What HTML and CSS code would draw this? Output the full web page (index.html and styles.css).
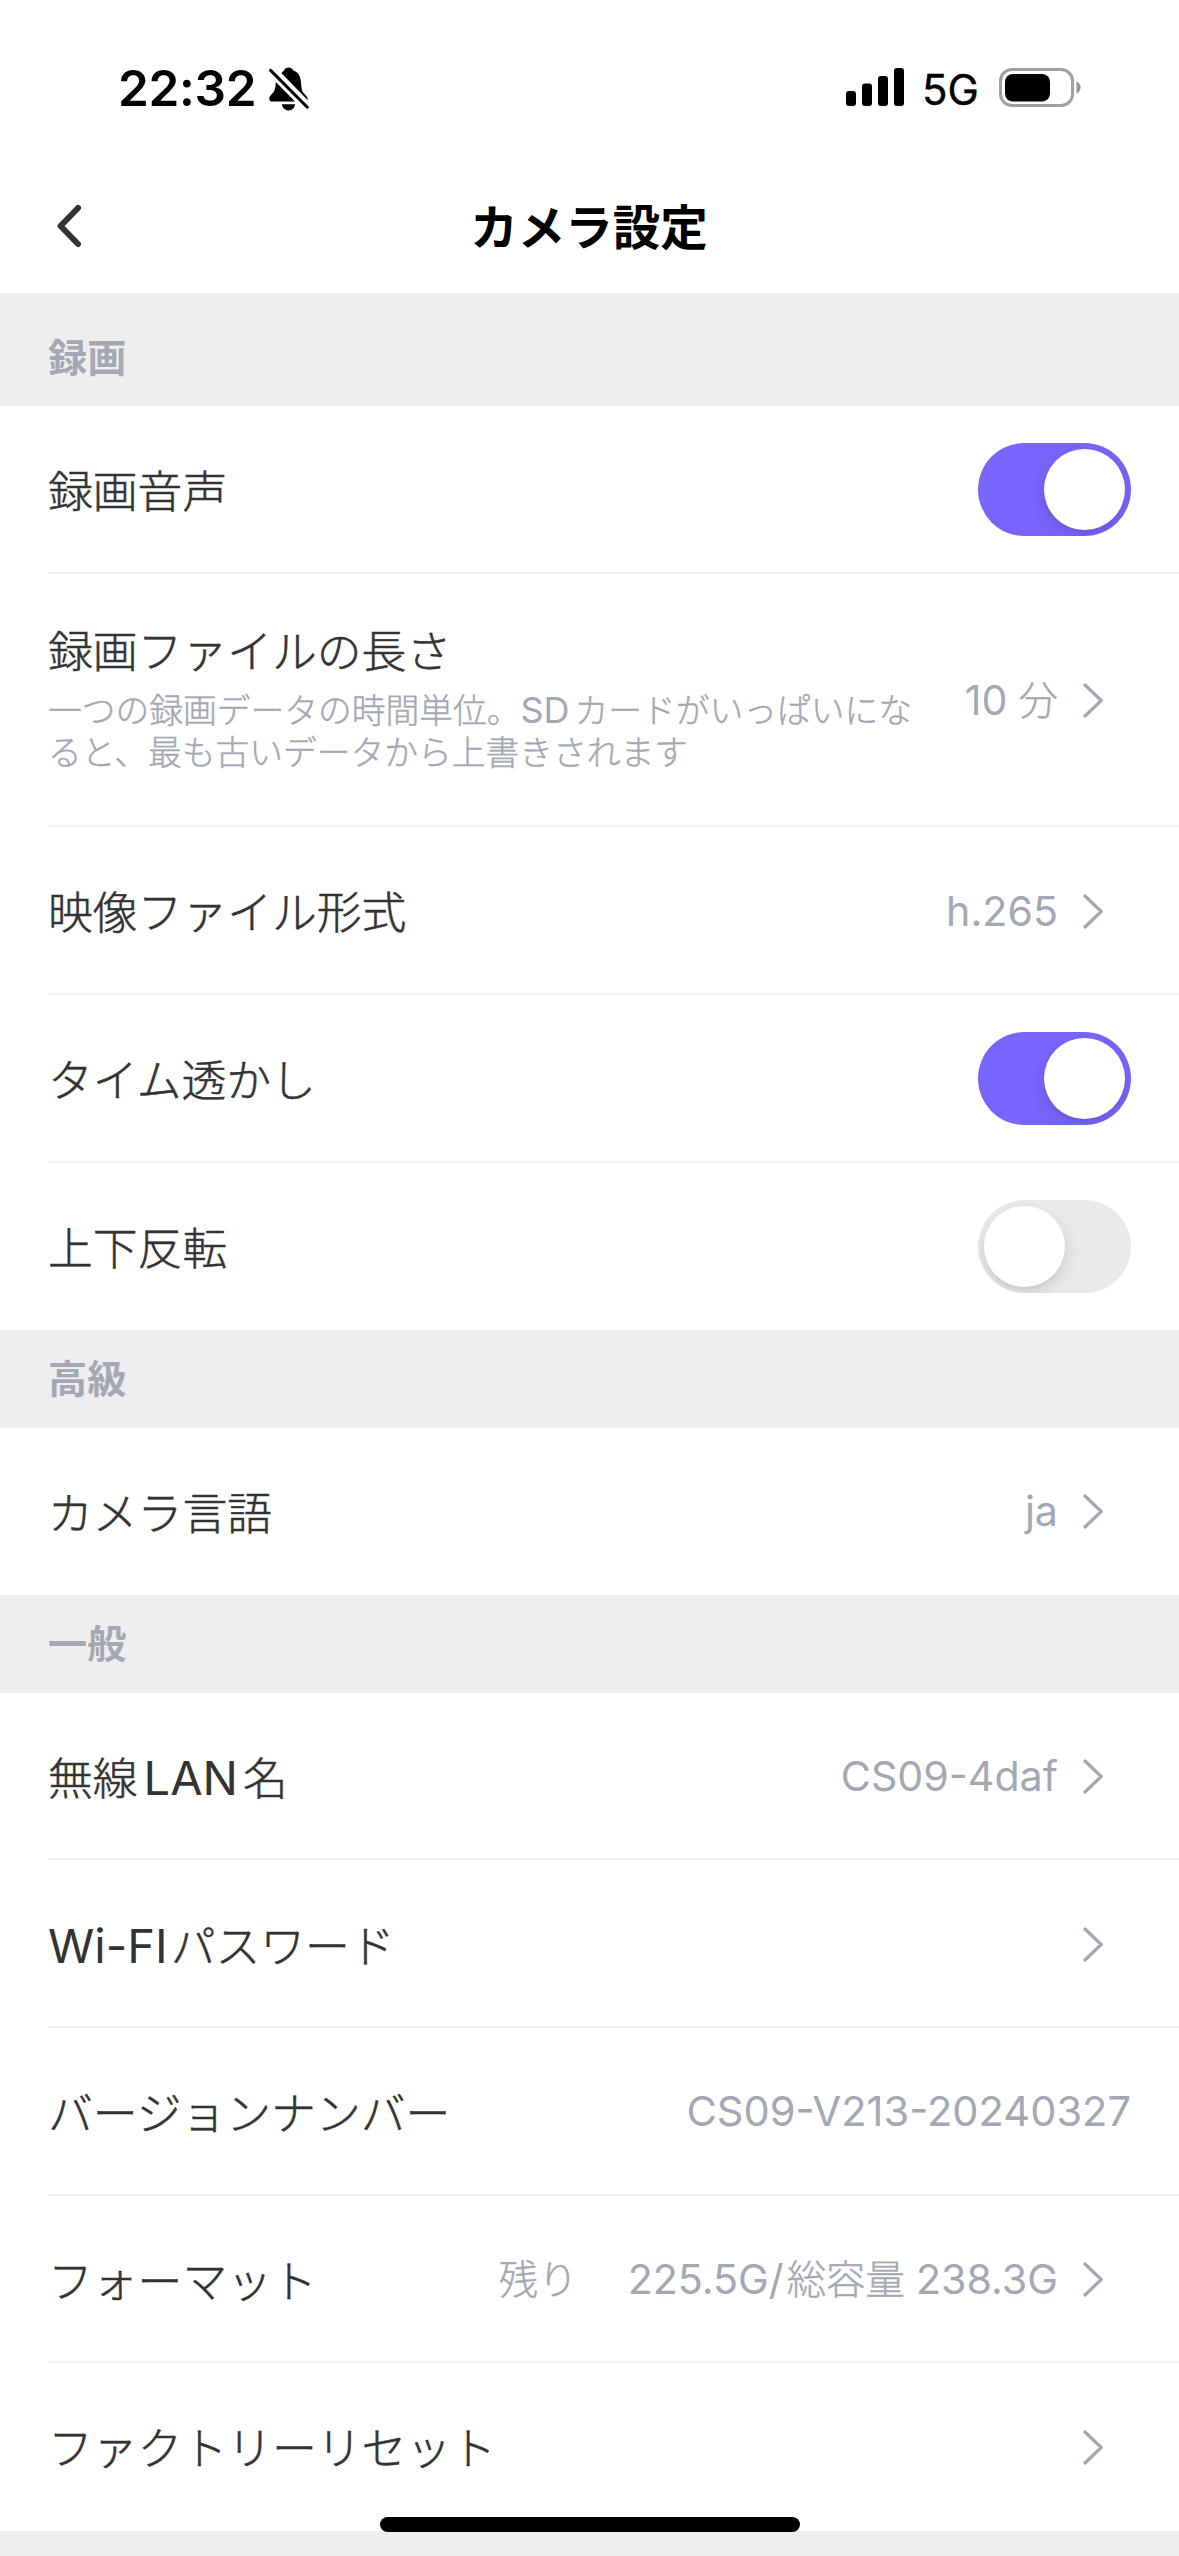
FILE: index.html
```html
<!DOCTYPE html>
<html lang="ja">
<head>
<meta charset="utf-8">
<meta name="viewport" content="width=device-width">
<title>カメラ設定</title>
<link rel="stylesheet" href="styles.css">
</head>
<body>
<svg class="defs" width="0" height="0" aria-hidden="true">
  <symbol id="chevron" viewBox="0 0 21 35"><path d="M2 2 L18.2 17.5 L2 33" fill="none" stroke="currentColor" stroke-width="3.2" stroke-linecap="round" stroke-linejoin="round"/></symbol>
</svg>
<div class="screen">
  <div class="statusbar">
    <span class="time">22:32</span>
    <svg class="bell" width="40" height="44" viewBox="0 0 40 44">
      <path d="M12.5 6.2 C13.5 4.8 14.3 4 15 3.4 C16 1.2 17.500 0.400 19.500 0.400 C21.600 0.400 23.400 1.300 24.300 3.400 C29.500 5.200 31.600 9.500 32 15.500 C32.400 22 33 24.500 35.500 27 C37.500 29 38.700 30.500 38.700 32 C38.700 32.400 38.600 32.600 38.400 32.800 Z"/>
      <path d="M6.800 15 L26 34.600 H3.400 C1.400 34.600 0.200 33.500 0.200 31.700 C0.200 29.700 2 28 4 25.800 C6 23.500 6.400 20.500 6.800 15 Z"/>
      <path d="M12.800 37.200 H26.200 C25.400 41 22.900 43.400 19.500 43.400 C16.100 43.400 13.600 41 12.800 37.200 Z"/>
      <path d="M1.600 3.400 L38.300 40.200" stroke="#fff" stroke-width="7"/>
      <path d="M1.600 3.400 L38.300 40.200" stroke="#000" stroke-width="3" stroke-linecap="round"/>
    </svg>
    <div class="indicators">
      <svg class="signal" width="58" height="38" viewBox="0 0 58 38">
        <rect x="0" y="23" width="10" height="15" rx="3"/>
        <rect x="16" y="15.500" width="10" height="22.500" rx="3"/>
        <rect x="32" y="8" width="10" height="30" rx="3"/>
        <rect x="48" y="0" width="10" height="38" rx="3"/>
      </svg>
      <span class="network">5G</span>
      <svg class="battery" width="82" height="40" viewBox="0 0 82 40">
        <rect x="1.500" y="1.500" width="72" height="36" rx="11.500" fill="none" stroke="#a0a0a0" stroke-width="3"/>
        <rect x="6" y="6" width="45" height="27.500" rx="8"/>
        <path d="M77.500 13.500 C83 15.500 83 23.500 77.500 25.500 Z" fill="#999"/>
      </svg>
    </div>
  </div>
  <header class="navbar">
    <svg class="back" width="26" height="44" viewBox="0 0 26 44"><path d="M22 4 L4.500 22 L22 40" fill="none" stroke="#333" stroke-width="6" stroke-linecap="round" stroke-linejoin="round"/></svg>
    <h1 class="title">カメラ設定</h1>
  </header>
  <main class="settings">
    <h2 class="section section-first">録画</h2>
    <div class="row"><span class="label">録画音声</span><span class="toggle on"><span class="knob"></span></span></div>
    <div class="row row-tall">
      <div class="text">
        <span class="label">録画ファイルの長さ</span>
        <p class="desc">一つの録画データの時間単位。<span class="latin">SD</span>カードがいっぱいになると、最も古いデータから上書きされます</p>
      </div>
      <span class="value"><span class="latin">10</span> 分</span><svg class="chevron"><use href="#chevron"/></svg>
    </div>
    <div class="row"><span class="label">映像ファイル形式</span><span class="value"><span class="latin">h.265</span></span><svg class="chevron"><use href="#chevron"/></svg></div>
    <div class="row"><span class="label">タイム透かし</span><span class="toggle on"><span class="knob"></span></span></div>
    <div class="row last"><span class="label">上下反転</span><span class="toggle"><span class="knob"></span></span></div>
    <h2 class="section">高級</h2>
    <div class="row last"><span class="label">カメラ言語</span><span class="value"><span class="latin">ja</span></span><svg class="chevron"><use href="#chevron"/></svg></div>
    <h2 class="section">一般</h2>
    <div class="row"><span class="label">無線<span class="latin lan">LAN</span>名</span><span class="value"><span class="latin">CS09-4daf</span></span><svg class="chevron"><use href="#chevron"/></svg></div>
    <div class="row"><span class="label"><span class="latin wifi">Wi-FI</span>パスワード</span><svg class="chevron"><use href="#chevron"/></svg></div>
    <div class="row"><span class="label">バージョンナンバー</span><span class="value"><span class="latin version">CS09-V213-20240327</span></span></div>
    <div class="row"><span class="label">フォーマット</span><span class="value"><span class="remain">残り</span><span class="latin free">225.5G/</span>総容量 <span class="latin">238.3G</span></span><svg class="chevron"><use href="#chevron"/></svg></div>
    <div class="row last"><span class="label">ファクトリーリセット</span><svg class="chevron"><use href="#chevron"/></svg></div>
  </main>
  <div class="home-indicator"></div>
</div>
</body>
</html>
```
FILE: styles.css
```css
* { box-sizing: border-box; }
body { margin: 0; background: #eee; font-family: Inter, "Noto Sans CJK JP", sans-serif; }
.defs { position: absolute; }
.screen { position: relative; width: 1179px; height: 2556px; overflow: hidden; background: #eee; }
.statusbar { display: flex; align-items: flex-start; height: 162px; padding: 67px 98px 0 118px; background: #fff; color: #000; }
.time { width: 150.500px; font-size: 49.500px; font-weight: 600; line-height: 42px; letter-spacing: -.3px; white-space: nowrap; }
.bell { flex: none; }
.indicators { display: flex; align-items: flex-start; margin-left: auto; }
.signal { margin-top: 1px; }
.network { width: 77px; margin: 4px 0 0 18px; font-size: 42px; font-weight: 400; -webkit-text-stroke: .4px; line-height: 38px; }
.battery { margin-top: 1px; }
.navbar { display: flex; align-items: center; height: 131px; padding: 0 56px; background: #fff; }
.back { flex: none; margin-bottom: 3px; }
.title { flex: 1; margin: 0 27px 0 0; text-align: center; font-size: 47.500px; font-weight: 700; line-height: 60px; }
.section { display: flex; align-items: center; height: 97.300px; margin: 0; padding: 0 48px; font-size: 39.200px; font-weight: 700; line-height: 50px; color: #a2a9b4; background: #eee; }
.section-first { height: 113px; padding-top: 17px; }
.row { display: flex; align-items: center; position: relative; height: 167.700px; padding: 0 48px; background: #fff; color: #333; }
.row::after { content: ""; position: absolute; left: 48px; right: 0; bottom: 0; height: 2px; background: #f1f1f1; }
.row.last::after { display: none; }
.row-tall { height: 253.700px; }
.label { display: block; font-size: 44.800px; font-weight: 300; -webkit-text-stroke: .5px; line-height: 60px; white-space: nowrap; }
.row > .label { padding-top: 4px; }
.label .latin { font-size: 47px; font-weight: 400; }
.latin { -webkit-text-stroke: 0; }
.text { width: 870px; padding-bottom: 5px; }
.desc { margin: 8px 0 0; font-size: 33.750px; font-weight: 300; -webkit-text-stroke: .4px; line-height: 42px; color: #a2a9b4; }
.desc .latin { margin-right: 5px; font-size: 36px; font-weight: 400; line-height: 1; }
.value { margin-left: auto; font-size: 39.400px; font-weight: 300; -webkit-text-stroke: .4px; line-height: 60px; white-space: pre; color: #a2a9b4; }
.value .latin { font-size: 41.200px; font-weight: 400; }
.value .version { font-size: 41.600px; }
.chevron { flex: none; width: 21px; height: 35px; margin: 0 27px 0 25px; color: #a2a9b4; }
.label + .chevron { margin-left: auto; }
.remain { margin-right: 50px; }
.free { margin-right: 3px; }
.lan { margin: 0 5px 0 6px; }
.wifi { margin-right: 3px; }
.toggle { flex: none; display: flex; width: 153px; height: 93px; margin-left: auto; padding: 6px; border-radius: 47px; overflow: hidden; background: #e9e9eb; }
.toggle.on { justify-content: flex-end; background: #7865fc; }
.knob { width: 81px; height: 81px; border-radius: 50%; background: #fff; box-shadow: 0 6px 16px rgba(0, 0, 0, .11), 0 3px 3px rgba(0, 0, 0, .04); }
.home-indicator { position: absolute; left: 380px; bottom: 24px; width: 420px; height: 15px; border-radius: 8px; background: #000; }
```
